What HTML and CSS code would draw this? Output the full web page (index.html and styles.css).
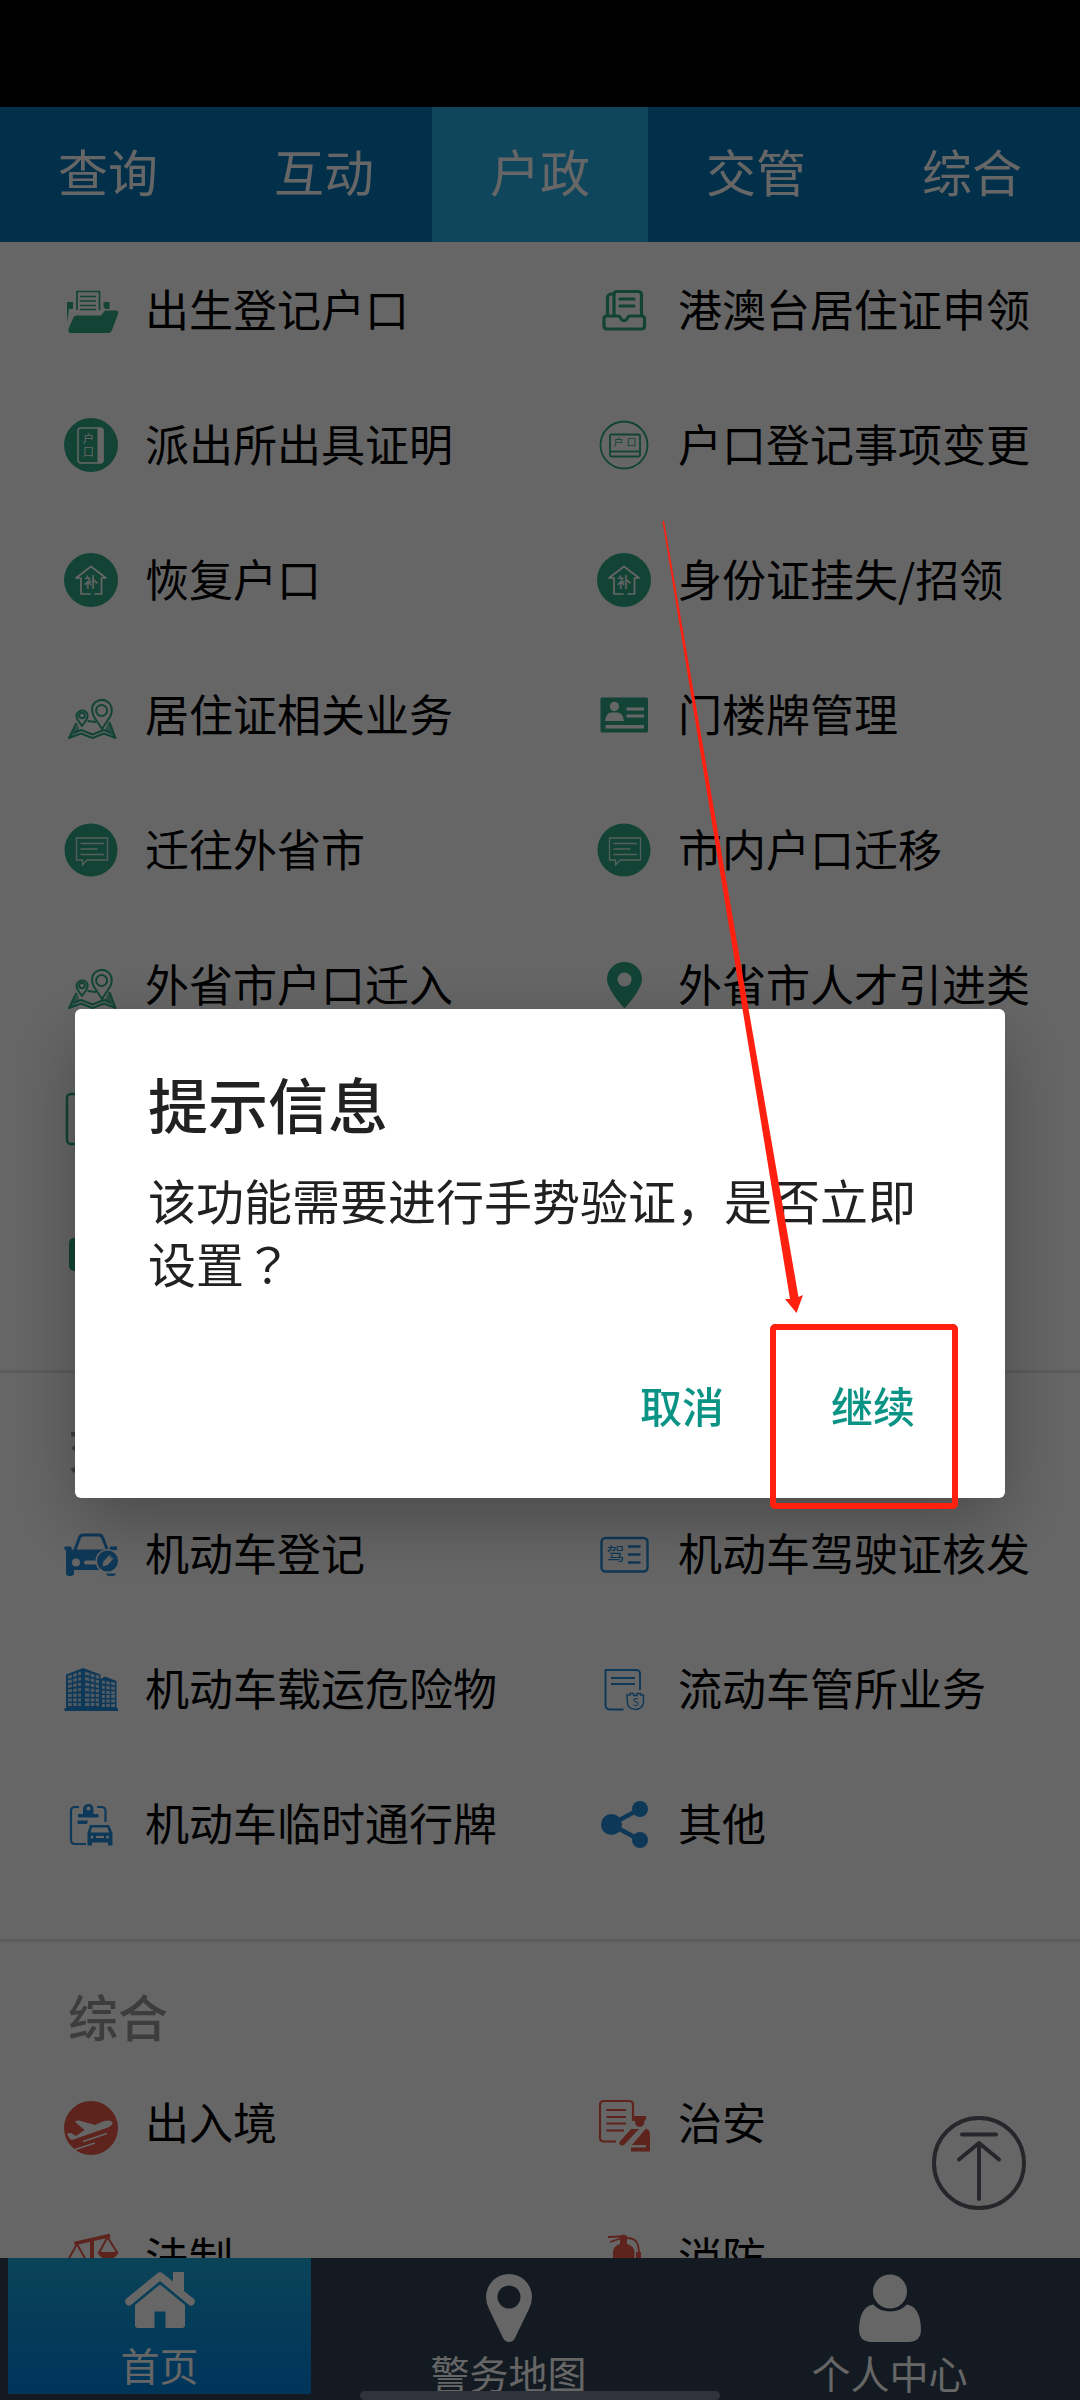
FILE: index.html
```html
<!DOCTYPE html>
<html lang="zh-CN">
<head>
<meta charset="utf-8">
<meta name="viewport" content="width=device-width, initial-scale=1">
<title>户政</title>
<link rel="stylesheet" href="styles.css">
</head>
<body>
<svg class="sprite" aria-hidden="true">
  <symbol id="i-folder" viewBox="0 0 64 64">
    <path d="M18 32V13.500H40.500V32" fill="none" stroke="currentColor" stroke-width="1.700"/>
    <path d="M21 18.500H37M21 23H37M21 27.500H37M21 31.500H37" stroke="currentColor" stroke-width="1.500"/>
    <path d="M8 24H14V31H10L8 45ZM44.500 24H50.500V31H46.500L44.500 29ZM18 37.500H42L46 32.500H57Q60 32.500 59 36L53 52Q52 55 49 55H12Q8.500 55 9.500 51L14 40.500Q15 37.500 18 37.500Z" fill="currentColor"/>
  </symbol>
  <symbol id="i-booklet" viewBox="0 0 64 64">
    <circle cx="32" cy="32" r="27" fill="currentColor"/>
    <rect x="19" y="15" width="25" height="35" rx="3" fill="none" stroke="#fff" stroke-width="1.500"/>
    <path d="M38.500 15H42Q44.500 15 44.500 18V47Q44.500 50 42 50H38.500Z" fill="#fff"/>
    <text x="29.500" y="30" class="glyph" font-size="11" fill="#fff">户</text>
    <text x="29.500" y="43" class="glyph" font-size="11" fill="#fff">口</text>
  </symbol>
  <symbol id="i-tray" viewBox="0 0 64 64">
    <g fill="none" stroke="currentColor" stroke-width="3.200" stroke-linejoin="round" stroke-linecap="round">
      <path d="M22 36V17Q22 13.500 25 13.500H46Q49.500 13.500 49.500 17V36"/>
      <path d="M20 16Q15.500 16 15.500 20V36"/>
      <path d="M14.500 38H26Q28 38 29 41Q32 44.500 35 41Q36 38 38 38H49.500Q52.500 38 52.500 41V48Q52.500 51 49.500 51H15Q12 51 12 48V41Q12 38 14.500 38Z"/>
      <path d="M28 21H42M28 28H42"/>
    </g>
  </symbol>
  <symbol id="i-card" viewBox="0 0 64 64">
    <g fill="none" stroke="currentColor" stroke-width="1.800">
      <circle cx="32" cy="32" r="23.500"/>
      <rect x="18" y="21.500" width="30" height="22" rx="1.500"/>
      <path d="M18 38.500H48"/>
    </g>
    <text x="26.500" y="33" class="glyph" font-size="10" fill="currentColor">户</text>
    <text x="39.500" y="33" class="glyph" font-size="10" fill="currentColor">口</text>
  </symbol>
  <symbol id="i-house" viewBox="0 0 64 64">
    <circle cx="32" cy="32" r="27" fill="currentColor"/>
    <path d="M31 46H22V30H17L32 18.500L47 30H42.500V46H36" fill="none" stroke="#fff" stroke-width="1.700" stroke-linejoin="round" stroke-linecap="round"/>
    <text x="32" y="38.500" class="glyph" font-size="14" font-weight="500" fill="#fff">补</text>
  </symbol>
  <symbol id="i-map" viewBox="0 0 64 64">
    <g fill="none" stroke="currentColor" stroke-width="2" stroke-linejoin="round">
      <path d="M43 46L34.500 33Q31 24 36 19.500Q42.500 14.500 49 19Q55 24 51.500 33Z"/>
      <circle cx="42.600" cy="27.500" r="5.500"/>
      <path d="M23 43L18.500 36.500Q16 31 20 28.500Q23 26.500 26.500 28.500Q30 31 27.500 36.500Z"/>
      <circle cx="23" cy="32.500" r="2.800"/>
      <path d="M17.500 40L10 55L22 50.500L33.500 55L45 50.500L56.500 55L50.500 39M28.500 38L37 39M14.500 50L22 47L33.500 51.500L45 47L52 50"/>
    </g>
    <path d="M10 55L19 41L20 48ZM56.500 55L50 38L46 47Z" fill="currentColor" opacity=".7"/>
  </symbol>
  <symbol id="i-idcard" viewBox="0 0 64 64">
    <rect x="8.500" y="14.500" width="47.500" height="35" rx="1.500" fill="currentColor"/>
    <g fill="#fff"><circle cx="22.400" cy="23.500" r="4.700"/><path d="M13 38Q14 30 19 29.500H26Q31 30 32 38ZM34.500 24.500H52V27.500H34.500ZM34.500 31.500H52V34.500H34.500ZM13.500 42H52V45.500H13.500Z"/></g>
  </symbol>
  <symbol id="i-chat" viewBox="0 0 64 64">
    <circle cx="32" cy="32" r="26.500" fill="currentColor"/>
    <path d="M17.500 20H48.500V42H28L23.500 47V42H17.500ZM21.500 25.500H45M21.500 31H38.500M21.500 36.500H45" fill="none" stroke="#fff" stroke-opacity=".8" stroke-width="1.300"/>
  </symbol>
  <symbol id="i-pin" viewBox="0 0 64 64">
    <path fill-rule="evenodd" fill="currentColor" d="M32.500 55.500Q15 36 15 26A17.500 17 0 0 1 50 26Q50 36 32.500 55.500ZM32.500 19.500A7 7 0 1 0 32.500 33.500A7 7 0 1 0 32.500 19.500Z"/>
  </symbol>
  <symbol id="i-frame" viewBox="0 0 64 64">
    <rect x="8" y="6" width="46" height="50" rx="4" fill="none" stroke="currentColor" stroke-width="2.500"/>
  </symbol>
  <symbol id="i-solid" viewBox="0 0 64 64">
    <rect x="10" y="15" width="44" height="33" rx="5" fill="currentColor"/>
  </symbol>
  <symbol id="i-car" viewBox="0 0 64 64">
    <path d="M16 28L20.500 15.500Q21.500 13 24 13H40Q42.500 13 43.500 15.500L48 27" fill="none" stroke="currentColor" stroke-width="3"/>
    <path fill-rule="evenodd" fill="currentColor" d="M5.500 24.500H12L13 27.500H50L51.500 24.500H58V28H54V48H15V51Q15 54 12 54H10Q7 54 7 51V28H5.500ZM17 36.500A4 4 0 1 0 17 44.500A4 4 0 1 0 17 36.500ZM27 38.500A2 2 0 0 0 27 42.500H38V38.500ZM47 51.500H57V52Q56 54 54 54H50Q48 54 47 51.500Z"/>
    <circle cx="48.500" cy="39" r="12" fill="#fff"/><circle cx="48.500" cy="39" r="10.500" fill="currentColor"/>
    <path d="M43 45L44 39.500L50.500 32.500L55 36.500L48.500 43.500ZM49.500 33.500L54 37.500" fill="#fff" stroke="currentColor" stroke-width=".8"/>
  </symbol>
  <symbol id="i-license" viewBox="0 0 64 64">
    <rect x="9.500" y="16" width="46" height="33.500" rx="4" fill="none" stroke="currentColor" stroke-width="2.400"/>
    <text x="23.500" y="39" class="glyph" font-size="18" fill="currentColor">驾</text>
    <path d="M36 24.500H48.500M36 32.500H48.500M36 40.500H48.500" stroke="currentColor" stroke-width="2.600"/>
  </symbol>
  <symbol id="i-building" viewBox="0 0 64 64">
    <path d="M5.500 51H7V17.500L24 11L41.500 17.500V22L46 19.500L57.500 24V51H59V54H5.500Z" fill="currentColor"/>
    <path d="M9 20.500L22 16M9 25L22 21.500M9 29.500L22 27M9 34L22 32.500M9 38.500L22 38M9 43H22M9 47.500H22M26 16L40 20.500M26 21.500L40 25M26 27L40 29.500M26 32.500L40 34M26 38L40 38.500M26 43H40M26 47.500H40M43 25L56 27M43 30L56 31.500M43 35L56 36M43 39.500H56M43 44H56M43 48.500H56" stroke="#fff" stroke-opacity=".75" stroke-width="3"/>
    <path d="M13.500 16V51M18.500 14V51M31 15V51M36 16V51M46.500 21V51M51.500 23V51" stroke="currentColor" stroke-width="1.400"/>
  </symbol>
  <symbol id="i-doc" viewBox="0 0 64 64">
    <path d="M48 33V17Q48 13 44 13H13.500V48Q13.500 52.500 18 52.500H31.500M19 21H43M19 27H43" fill="none" stroke="currentColor" stroke-width="1.900"/>
    <path d="M35 38H38V36.500H41.500V38.500H45V36.500H48.500V38H51.500V46Q50 52 43.500 52.500Q36 52 35.500 46Z" fill="none" stroke="currentColor" stroke-width="1.400"/>
    <text x="43.500" y="49" class="glyph" font-size="11" fill="currentColor">S</text>
  </symbol>
  <symbol id="i-permit" viewBox="0 0 64 64">
    <path d="M20 15H16Q12 15 12 19V48Q12 52 16 52H27M38 15H42Q46.500 15 46.500 19V30" fill="none" stroke="currentColor" stroke-width="2.200"/>
    <path fill-rule="evenodd" fill="currentColor" d="M24 22V17.500Q24.500 12 29.500 12Q34.500 12 34.500 17.500V22H39.500V25.500H19V22ZM29.500 14.500A2 2 0 1 0 29.500 18.500A2 2 0 1 0 29.500 14.500ZM18.500 28.500H29L28 32H18.500ZM31 33H50L53.500 41V53.500H49V50.500H33V53.500H28.500V41ZM33 35.500L31.500 40.500H50L48.500 35.500ZM33 43.500A1.500 1.500 0 1 0 33 46.500A1.500 1.500 0 1 0 33 43.500ZM48.500 43.500A1.500 1.500 0 1 0 48.500 46.500A1.500 1.500 0 1 0 48.500 43.500ZM37 44V46H45V44Z"/>
  </symbol>
  <symbol id="i-share" viewBox="0 0 64 64">
    <path d="M48 17L19 32.500L48 48" fill="none" stroke="currentColor" stroke-width="4.500"/>
    <g fill="currentColor"><circle cx="19.500" cy="32.500" r="10.500"/><circle cx="48" cy="17" r="8"/><circle cx="48" cy="48" r="8"/></g>
  </symbol>
  <symbol id="i-plane" viewBox="0 0 64 64">
    <circle cx="32" cy="37" r="27" fill="currentColor"/>
    <path d="M8 42.500L12 42L17 45L25.500 39L16 31Q17 29 20 29.500L36 34L45 30Q52 28.500 53.500 31.500Q54 34 49 36.500L13 49Q10 48 8 42.500Z" fill="#fff"/>
    <path d="M24 50.500L48 42.500M16 58.500L36 52" stroke="#fff" stroke-width="1.700"/>
  </symbol>
  <symbol id="i-police" viewBox="0 0 64 64">
    <path d="M41 30V14Q41 10 37 10H12Q8 10 8 14V46.500Q8 50.500 12 50.500H24M14.500 19H34M14.500 26H34M14.500 32.500H34M14.500 39.500H32" fill="none" stroke="currentColor" stroke-width="2.200"/>
    <path d="M41 25H54V28L52.500 30Q52.500 35.500 47.500 36Q43 35.500 43 30.500L41 28ZM39 38H47L32 54Q28 55.500 27 51.500ZM54 37.500Q58 39 58 43V60.500H39V56.500H54V54H40Z" fill="currentColor"/>
  </symbol>
  <symbol id="i-scale" viewBox="0 0 64 64">
    <path d="M15.500 17.500L51 9.500" stroke="currentColor" stroke-width="3.500"/>
    <path d="M33 14V56M20 56H46M18 18L8 36M18 18L28 36M48.500 11L40 27M48.500 11L58.500 27" stroke="currentColor" stroke-width="2"/>
    <path d="M31 14H35V56H31ZM38.500 26H59.500Q57 33 49 33Q41 33 38.500 26ZM7 35H29Q27 42 18 42Q9 42 7 35Z" fill="currentColor"/>
  </symbol>
  <symbol id="i-extinguisher" viewBox="0 0 64 64">
    <path d="M16 11L30 10.500M18 16L30 12M35 12Q44 12 46 19L47 26" fill="none" stroke="currentColor" stroke-width="1.800"/>
    <path d="M28 10Q31 7.500 35 10V18Q42.500 20 42.500 27V56H21V27Q21 20 28 18ZM44 26H49V34H44Z" fill="currentColor"/>
  </symbol>
</svg>

<div class="app">
  <div class="status-bar"></div>
  <nav class="tabs">
    <a class="tab" href="#query">查询</a>
    <a class="tab" href="#interact">互动</a>
    <a class="tab tab--active" href="#household">户政</a>
    <a class="tab" href="#traffic">交管</a>
    <a class="tab" href="#general">综合</a>
  </nav>

  <main class="content">
    <section class="group group--green" id="household">
      <div class="services">
        <a class="service" href="#"><svg class="icon"><use href="#i-folder"/></svg>出生登记户口</a>
        <a class="service" href="#"><svg class="icon"><use href="#i-tray"/></svg>港澳台居住证申领</a>
        <a class="service" href="#"><svg class="icon"><use href="#i-booklet"/></svg>派出所出具证明</a>
        <a class="service" href="#"><svg class="icon"><use href="#i-card"/></svg>户口登记事项变更</a>
        <a class="service" href="#"><svg class="icon"><use href="#i-house"/></svg>恢复户口</a>
        <a class="service" href="#"><svg class="icon"><use href="#i-house"/></svg>身份证挂失/招领</a>
        <a class="service" href="#"><svg class="icon"><use href="#i-map"/></svg>居住证相关业务</a>
        <a class="service" href="#"><svg class="icon"><use href="#i-idcard"/></svg>门楼牌管理</a>
        <a class="service" href="#"><svg class="icon"><use href="#i-chat"/></svg>迁往外省市</a>
        <a class="service" href="#"><svg class="icon"><use href="#i-chat"/></svg>市内户口迁移</a>
        <a class="service" href="#"><svg class="icon"><use href="#i-map"/></svg>外省市户口迁入</a>
        <a class="service" href="#"><svg class="icon"><use href="#i-pin"/></svg>外省市人才引进类</a>
        <a class="service" href="#"><svg class="icon"><use href="#i-frame"/></svg></a>
        <a class="service" href="#"></a>
        <a class="service" href="#"><svg class="icon"><use href="#i-solid"/></svg></a>
      </div>
    </section>
    <section class="group group--blue" id="traffic">
      <h2 class="group-title">交管</h2>
      <div class="services">
        <a class="service" href="#"><svg class="icon"><use href="#i-car"/></svg>机动车登记</a>
        <a class="service" href="#"><svg class="icon"><use href="#i-license"/></svg>机动车驾驶证核发</a>
        <a class="service" href="#"><svg class="icon"><use href="#i-building"/></svg>机动车载运危险物</a>
        <a class="service" href="#"><svg class="icon"><use href="#i-doc"/></svg>流动车管所业务</a>
        <a class="service" href="#"><svg class="icon"><use href="#i-permit"/></svg>机动车临时通行牌</a>
        <a class="service" href="#"><svg class="icon"><use href="#i-share"/></svg>其他</a>
      </div>
    </section>
    <section class="group group--red" id="general">
      <h2 class="group-title">综合</h2>
      <div class="services">
        <a class="service" href="#"><svg class="icon"><use href="#i-plane"/></svg>出入境</a>
        <a class="service" href="#"><svg class="icon"><use href="#i-police"/></svg>治安</a>
        <a class="service" href="#"><svg class="icon"><use href="#i-scale"/></svg>法制</a>
        <a class="service" href="#"><svg class="icon"><use href="#i-extinguisher"/></svg>消防</a>
      </div>
    </section>
    <button class="to-top" type="button" aria-label="返回顶部">
      <svg viewBox="0 0 96 96" fill="none" stroke="currentColor" stroke-width="4" stroke-linecap="round" stroke-linejoin="round">
        <circle cx="48" cy="48" r="45"/><path d="M31 19.500H65M48 29V84M28 44.500L48 28L68 44.500"/>
      </svg>
    </button>
  </main>

  <nav class="bottom-nav">
    <a class="nav-item nav-item--active" href="#home">
      <svg class="nav-icon" viewBox="0 0 72 56" fill="#fff">
        <path d="M49 0H60V19L70 27Q72 29 70 32Q68 35 65 33L36 9L7 33Q4 35 2 32Q0 29 2 27L33 1.500Q36 -1 39 1.500L49 9.500Z"/>
        <path d="M36 12.500L61 33V53Q61 56 58 56H41.500V39.500H30.500V56H14Q11 56 11 53V33Z"/>
      </svg>
      <span>首页</span>
    </a>
    <a class="nav-item" href="#map">
      <svg class="nav-icon" viewBox="0 0 46 68" fill="#fff">
        <path fill-rule="evenodd" d="M23 0A23 23 0 0 1 46 23Q46 29 43 35L29 64Q27 68 23 68Q19 68 17 64L3 35Q0 29 0 23A23 23 0 0 1 23 0ZM23 11.500A11.500 11.500 0 1 0 23 34.500A11.500 11.500 0 1 0 23 11.500Z"/>
      </svg>
      <span>警务地图</span>
    </a>
    <a class="nav-item" href="#me">
      <svg class="nav-icon" viewBox="0 0 62 68" fill="#fff">
        <circle cx="31" cy="17.500" r="17"/>
        <path d="M14 30.500Q21 37.500 31 37.500Q41 37.500 48 30.500Q62 33 62 57Q61.500 67 51 68H11Q.5 67 0 57Q0 33 14 30.500Z"/>
      </svg>
      <span>个人中心</span>
    </a>
  </nav>
</div>

<div class="scrim">
  <div class="dialog" role="alertdialog" aria-modal="true" aria-labelledby="dialog-title" aria-describedby="dialog-text">
    <h1 class="dialog-title" id="dialog-title">提示信息</h1>
    <p class="dialog-text" id="dialog-text">该功能需要进行手势验证，是否立即设置<span class="centered-mark" lang="zh-TW">？</span></p>
    <div class="dialog-actions">
      <button class="dialog-button" type="button">取消</button>
      <button class="dialog-button" type="button">继续<span class="marker"></span>
        <svg class="arrow" viewBox="0 0 142 792" fill="#ff2010" aria-hidden="true"><path d="M.5 0L2 0L136.500 776L141 774L134.500 792L123 778L128 778Z"/></svg>
      </button>
    </div>
  </div>
</div>
<div class="gesture-bar"></div>
</body>
</html>
```
FILE: styles.css
```css
* {
  box-sizing: border-box;
}

body {
  margin: 0;
  background: #fff;
  color: #000;
  font-family: "Noto Sans CJK SC", sans-serif;
}

a {
  color: inherit;
  text-decoration: none;
}

button {
  border: 0;
  background: none;
  padding: 0;
  font: inherit;
}

.sprite {
  display: none;
}

.glyph {
  text-anchor: middle;
}

.app {
  display: flex;
  flex-direction: column;
  height: 100vh;
}

.status-bar {
  flex: none;
  height: 107px;
  background: #000;
}

/* Top tabs */
.tabs {
  flex: none;
  display: flex;
  background: #0578b9;
  color: #fff;
  font-size: 50px;
  line-height: 127px;
  text-align: center;
}

.tab {
  flex: 1;
  padding-bottom: 8px;
}

.tab--active {
  background: #28afe4;
}

/* Service lists */
.content {
  position: relative;
  flex: 1;
  min-height: 0;
  overflow: hidden;
}

.group {
  padding-bottom: 48px;
}

.group + .group {
  border-top: 3px solid #e6e6e6;
}

.group--green {
  --accent: #2da986;
}

.group--blue {
  --accent: #248cdb;
}

.group--red {
  --accent: #e85748;
}

.group-title {
  margin: 0;
  padding: 37px 0 3px 68px;
  color: #999;
  font-size: 50px;
  font-weight: 500;
  line-height: 73px;
}

.services {
  display: grid;
  grid-template-columns: 1fr 1fr;
  grid-auto-rows: 135px;
  padding-right: 14px;
}

.service {
  display: flex;
  align-items: center;
  gap: 22px;
  padding: 0 0 4px 59px;
  font-size: 44px;
  line-height: 64px;
  white-space: nowrap;
}

.icon {
  flex: none;
  width: 64px;
  height: 64px;
  margin-top: 4px;
  color: var(--accent);
}

.to-top {
  position: absolute;
  right: 53px;
  bottom: 47px;
  width: 96px;
  height: 96px;
  color: #5f616b;
}

.to-top svg {
  display: block;
}

/* Bottom navigation */
.bottom-nav {
  flex: none;
  display: grid;
  grid-template-columns: 318fr 381fr 381fr;
  height: 142px;
  background: #304153;
  color: #fff;
  font-size: 39px;
  line-height: 48px;
}

.nav-item {
  display: flex;
  flex-direction: column;
  align-items: center;
  gap: 6px;
  padding-top: 16px;
}

.nav-item--active {
  gap: 12px;
  margin: 0 7px 6px 8px;
  padding-top: 14px;
  background: linear-gradient(#18a8dc, #0084e2);
}

.nav-icon {
  flex: none;
  height: 68px;
}

.nav-item--active .nav-icon {
  height: 56px;
}

.gesture-bar {
  position: fixed;
  bottom: 0;
  left: 33.333%;
  width: 33.333%;
  height: 9px;
  border-radius: 5px;
  background: #30323c;
}

/* Dialog */
.scrim {
  position: fixed;
  inset: 0;
  display: flex;
  align-items: center;
  padding: 107px 75px 0;
  background: rgba(0, 0, 0, .6);
}

.dialog {
  flex: 1;
  padding: 58px 46px 40px 73px;
  border-radius: 6px;
  background: #fff;
  box-shadow: 0 24px 72px rgba(0, 0, 0, .28);
  color: #212121;
}

.dialog-title {
  margin: 0 0 29px;
  font-size: 60px;
  font-weight: 500;
  line-height: 72px;
}

.dialog-text {
  margin: 0 27px 56px 0;
  font-size: 48px;
  line-height: 63px;
}

.centered-mark {
  font-family: "Noto Sans CJK TC", sans-serif;
}

.dialog-actions {
  display: flex;
  justify-content: flex-end;
  gap: 19px;
}

.dialog-button {
  position: relative;
  height: 108px;
  padding: 0 44px;
  color: #0b9485;
  font-size: 42px;
  font-weight: 500;
}

.marker {
  position: absolute;
  inset: -26px 1px -51px -17px;
  border: 6px solid #ff2010;
  border-radius: 5px;
}

.arrow {
  position: absolute;
  right: 155px;
  bottom: 145px;
  width: 142px;
  height: 792px;
}
```
